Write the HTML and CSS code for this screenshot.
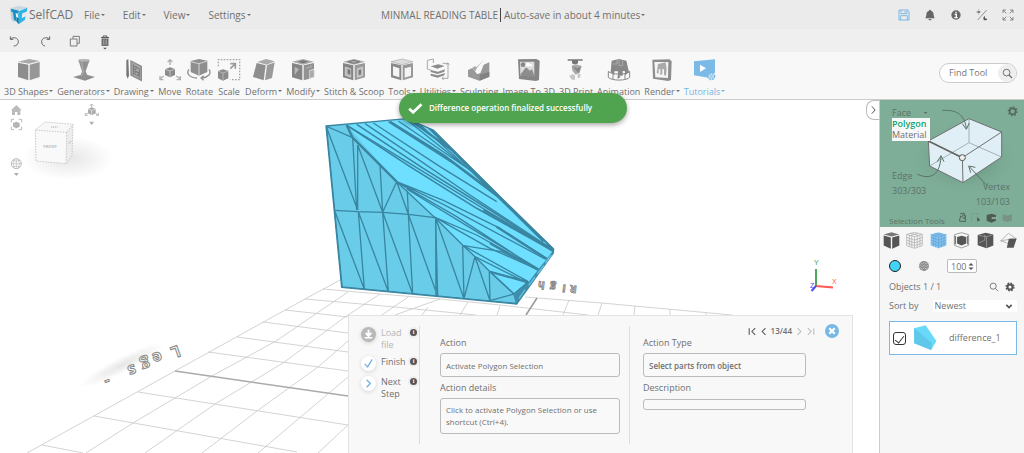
FILE: index.html
```html
<!DOCTYPE html>
<html lang="en">
<head>
<meta charset="utf-8">
<title>SelfCAD</title>
<link rel="stylesheet" href="styles.css">
</head>
<body>
<div class="app">
<header class="menubar">
  <a class="brand" href="#">
    <svg class="brand-mark" viewBox="0 0 54 60" aria-hidden="true"><path d="M0 10 26 2 54 8 26 16z" fill="#c9d8df"/><path d="M0 10 12 13 14 52 5 45z" fill="#b9ccd5"/><path d="M4 11 27 17 24 26 17 24 20 50 12 44 9 22 3 19z" fill="#168fc4"/><path d="M28 18 52 8 50 20 37 25 35 40 46 34 45 44 26 58 24 28z" fill="#2bb4ea"/><path d="M20 50 26 58 26 40 19 36z" fill="#0b76a8"/></svg>
    <span>SelfCAD</span>
  </a>
  <nav class="menus">
    <button class="menu caret">File</button>
    <button class="menu caret">Edit</button>
    <button class="menu caret">View</button>
    <button class="menu caret">Settings</button>
  </nav>
  <div class="doc">
    <span class="doc-name">MINMAL READING TABLE</span>
    <button class="menu caret autosave">Auto-save in about 4 minutes</button>
  </div>
  <div class="status">
    <button class="icon-btn" aria-label="Save"><svg viewBox="0 0 36 36"><path d="M3 3h26l4 4v26H3zM9 3v11h18V3M8 33V20h20v13M21 6v5" fill="none" stroke="#7db9e3" stroke-width="3"/></svg></button>
    <button class="icon-btn" aria-label="Notifications"><svg viewBox="0 0 36 36"><path d="M18 2c2 0 3 1 3 3 6 2 8 6 8 12 0 6 2 8 4 11H3c2-3 4-5 4-11 0-6 2-10 8-12 0-2 1-3 3-3zM13 30h10c-1 5-9 5-10 0z" fill="#666"/></svg></button>
    <button class="icon-btn" aria-label="Information"><svg viewBox="0 0 36 36"><circle cx="18" cy="18" r="14" fill="#666"/><path d="M18 8v5M14 16h5v10M13 26h10" stroke="#fff" stroke-width="4" fill="none"/></svg></button>
    <button class="icon-btn" aria-label="Light or dark theme"><svg viewBox="0 0 36 36"><path d="M32 3 5 33" stroke="#666" stroke-width="2"/><circle cx="8" cy="9" r="4" fill="#777"/><path d="M8 1v3M8 14v3M0 9h3M13 9h3" stroke="#888" stroke-width="2"/><path d="M27 21c-2 6 1 9 7 8-2 6-11 6-12 0 0-4 2-7 5-8z" fill="#555"/></svg></button>
    <button class="icon-btn" aria-label="Full screen"><svg viewBox="0 0 36 36"><path d="M3 12V3h9M3 3l10 10M24 3h9v9M33 3 23 13M3 24v9h9M3 33l10-10M33 24v9h-9M33 33 23 23" fill="none" stroke="#777" stroke-width="2.5"/></svg></button>
  </div>
</header>

<div class="quickbar">
  <button class="icon-btn" aria-label="Undo"><svg viewBox="0 0 36 36"><path d="M4 4v9h9M5 12c8-7 23-4 23 8 0 8-6 13-14 13" fill="none" stroke="#666" stroke-width="3"/></svg></button>
  <button class="icon-btn" aria-label="Redo"><svg viewBox="0 0 36 36"><path d="M32 4v9h-9M31 12C23 5 8 8 8 20c0 8 4 12 10 13" fill="none" stroke="#666" stroke-width="3"/></svg></button>
  <button class="icon-btn" aria-label="Copy"><svg viewBox="0 0 36 36"><path d="M12 11V4h19v21h-6M4 12h20v21H4z" fill="none" stroke="#666" stroke-width="2.5"/></svg></button>
  <button class="icon-btn" aria-label="Delete"><svg viewBox="0 0 36 48"><path d="M5 8h26M12 7V3h12v4" stroke="#555" stroke-width="3" fill="none"/><path d="M7 11h22v24H7z" fill="#666"/><path d="M13 14v18M18 14v18M23 14v18" stroke="#bbb" stroke-width="2"/><path d="m12 41h12l-6 5z" fill="#555"/></svg></button>
</div>

<div class="toolbar">
  <nav class="tools">
    <button class="tool"><svg viewBox="0 0 72 72"><path d="M3 11 36 3 68 9 36 17z" fill="#aaa"/><path d="M3 14 34 20v47L3 57z" fill="#8d8d8d"/><path d="M38 20 68 12v45L38 67z" fill="#979797"/></svg><span class="caret">3D Shapes</span></button>
    <button class="tool"><svg viewBox="0 0 72 72"><path d="M3 57 36 48l33 9-30 11z" fill="#8e8e8e"/><path d="M19 6h34L41 40l7 16-12 5-12-5 6-16z" fill="#919191"/><ellipse cx="36" cy="7" rx="17" ry="4" fill="#b5b5b5"/><path d="M28 10 34 40l-6 14" stroke="#aaa" stroke-width="4" fill="none"/></svg><span class="caret">Generators</span></button>
    <button class="tool"><svg viewBox="0 0 72 72"><path d="M13 7 19 3l2 50-4 9-4-10z" fill="#777"/><path d="M27 9 58 25v42L27 51z" fill="#aaa" stroke="#8a8a8a" stroke-width="4"/><path d="M34 19v31M34 23l18 9v27M34 37l18 9M42 26v9l-8-3M36 47l13 7V44l-6-3z" fill="none" stroke="#777" stroke-width="3"/></svg><span class="caret">Drawing</span></button>
    <button class="tool"><svg viewBox="0 0 72 72"><path d="M21 34 36 28l15 5v18l-15 7-15-7z" fill="#8b8b8b"/><path d="m21 34 15 5 15-6M36 39v19" stroke="#ddd" stroke-width="2" fill="none"/><path d="M36 21V6M29 12l7-7 7 7M17 54 6 63M6 54v11h10M55 54l12 9M67 54v11H56" stroke="#b0b0b0" stroke-width="4" fill="none"/></svg><span>Move</span></button>
    <button class="tool"><svg viewBox="0 0 72 72"><path d="M11 9 36 3l25 5v34L36 53 11 42z" fill="#8f8f8f"/><path d="m11 11 25 6 25-8M36 17v36" stroke="#d5d5d5" stroke-width="3" fill="none"/><path d="M6 34C-4 46 8 60 30 60M66 34c9 13-3 24-20 26M50 53l-8 7 8 7" stroke="#929292" stroke-width="4" fill="none"/></svg><span>Rotate</span></button>
    <button class="tool"><svg viewBox="0 0 72 72"><path d="M4 25V5h64v60H40" fill="none" stroke="#a5a5a5" stroke-width="4" stroke-dasharray="5 4"/><path d="m3 39 15-5 16 5v22l-16 7-15-7z" fill="#8b8b8b"/><path d="m3 39 15 6 16-6M18 45v23" stroke="#ccc" stroke-width="2" fill="none"/><path d="M40 32 54 18M40 17h15v15" stroke="#999" stroke-width="5" fill="none"/></svg><span>Scale</span></button>
    <button class="tool"><svg viewBox="0 0 72 72"><path d="M16 12 42 3l26 7-24 10z" fill="#aaa"/><path d="M14 15 41 22 35 67 3 57z" fill="#8e8e8e"/><path d="M45 22 68 13 60 60 39 67z" fill="#9a9a9a"/></svg><span class="caret">Deform</span></button>
    <button class="tool"><svg viewBox="0 0 72 72"><path d="M3 11 36 3l33 8-33 9z" fill="#aaa"/><path d="m20 11 16-4 17 4-17 5z" fill="#777"/><path d="M3 15 34 22v45L3 58z" fill="#858585"/><path d="M11 27 24 33 11 51z" fill="#b8b8b8"/><path d="m38 22 31-7v18l-14 4v25l-17 5z" fill="#929292"/><path d="m46 31 17-6M56 38v23l13-4V35z" stroke="#c8c8c8" stroke-width="2" fill="#aaa"/></svg><span class="caret">Modify</span></button>
    <button class="tool"><svg viewBox="0 0 72 72"><path d="M3 11 36 3l33 8-33 9z" fill="#aaa"/><path d="m18 11 18-4 17 4-17 5z" fill="none" stroke="#777" stroke-width="3"/><path d="M3 15 34 22v45L3 58z" fill="#858585"/><path d="M38 22 69 15v43l-31 9z" fill="#999"/><path d="m10 27 16 6v25l-16-6zM46 32l16-5v26l-16 5z" fill="#bbb" stroke="#ddd" stroke-width="2"/><path d="m17 33 8 3v14l-8-3zM50 37l7-2v14l-7 2z" fill="#777"/></svg><span>Stitch &amp; Scoop</span></button>
    <button class="tool"><svg viewBox="0 0 72 72"><path d="M3 11 36 3l33 8-33 9z" fill="#ddd" stroke="#aaa" stroke-width="2"/><path d="M3 15 34 22v45L3 58z" fill="#8a8a8a"/><path d="M38 22 69 15v43l-31 9z" fill="#999"/><path d="m9 25 19 6v27L9 52zM44 31l19-5v27l-19 6z" fill="#f4f4f4"/></svg><span class="caret">Tools</span></button>
    <button class="tool"><svg viewBox="0 0 72 72"><path d="M4 7 22 3v12M4 7v26l12 4M50 16h16v45H48M61 20l5-5 4 5M53 57l-5 4 5 5" fill="none" stroke="#999" stroke-width="2.5"/><path d="m14 25 23-6 19 5-22 8zM14 36l22 5 21-7-2 7-20 7-21-6zM14 47l22 5 21-7-2 7-20 7-21-6z" fill="#8d8d8d"/></svg><span class="caret">Utilities</span></button>
    <button class="tool"><svg viewBox="0 0 72 72"><path d="M3 36 16 30 30 48 40 46 50 20 67 13v43L37 68 3 56z" fill="#999"/><path d="m38 50 29-9v15L38 68z" fill="#828282"/><path d="M53 3 31 28l-7 13-8-12c5-4 8-4 13-2z" fill="#aaa"/></svg><span>Sculpting</span></button>
    <button class="tool"><svg viewBox="0 0 72 72"><path d="M3 4 58 3l10 5-2 58-9 3L6 63z" fill="#858585"/><path d="M9 11h43v43L10 53z" fill="#ddd"/><path d="m10 50 17-22 12 10 6-5 7 20v4l-42-4z" fill="#8d8d8d"/><circle cx="18" cy="20" r="7" fill="#888"/><path d="M26 20q4-9 12-3l8 3v5H26z" fill="#fff"/></svg><span>Image To 3D</span></button>
    <button class="tool"><svg viewBox="0 0 72 72"><path d="M11 4h45v4H11zM24 8h18v8l-5 3h-8l-5-3z" fill="#777"/><path d="m23 23 12-4 18 5-6 20-12 6-10-12z" fill="#aaa"/><path d="m25 25 15 6 11-6-7 20-10-10z" fill="#888"/><path d="m15 54 13-6 5 5v12h-9zM41 45l8 3v10l-8 3z" fill="#c6c6c6"/></svg><span>3D Print</span></button>
    <button class="tool"><svg viewBox="0 0 72 72"><path d="M14 8 36 3l22 5 8 35-12 9V40l-7-1v14H33V40H22v12L11 42z" fill="#888"/><path d="M36 5v18h11V7M18 18h12V6" fill="none" stroke="#aaa" stroke-width="3"/><path d="M4 40v18c9 11 56 11 64 0V40c-9 11-55 11-64 0zM18 48v16M54 48v16" fill="none" stroke="#888" stroke-width="3"/><path d="m32 52 9 5-9 5z" fill="#777"/></svg><span>Animation</span></button>
    <button class="tool"><svg viewBox="0 0 72 72"><path d="M7 5 58 4l7 6-2 56-8 3L9 62z" fill="#8d8d8d"/><path d="M13 12 55 12 54 60 16 58z" fill="#f5f5f5"/><path d="m24 18 23-5 3 20-2 20-6-2V33l-5 1v15l-6 2V33l-5 1v13l-6-2z" fill="#aaa"/></svg><span class="caret">Render</span></button>
    <button class="tool active"><svg viewBox="0 0 72 72"><path d="M3 10 66 4v41c-14 0-17 10-15 15L3 52z" fill="#7bb9e6"/><path d="m21 20 18 11-18 11z" fill="#fff"/><circle cx="55" cy="55" r="10" fill="#c3def2" stroke="#7bb9e6" stroke-width="4" stroke-dasharray="5 3"/><path d="m49 48 12 14M61 49 49 61" stroke="#7bb9e6" stroke-width="2"/></svg><span class="caret">Tutorials</span></button>
  </nav>
  <form class="find">
    <input type="text" aria-label="Find Tool" placeholder="Find Tool">
    <button type="button" aria-label="Search"><svg viewBox="0 0 36 36"><circle cx="15" cy="15" r="11" fill="none" stroke="#666" stroke-width="3"/><path d="m23 23 10 10" stroke="#666" stroke-width="4"/></svg></button>
  </form>
</div>

<div class="toast" role="status"><svg viewBox="0 0 44 33" aria-hidden="true"><path d="M3 17 15 28 40 4" fill="none" stroke="#fff" stroke-width="8"/></svg><span>Difference operation finalized successfully</span></div>

<main class="workspace">
<section class="stage">
  <svg class="scene" viewBox="0 0 880 353" preserveAspectRatio="xMinYMin slice" aria-label="3D scene">
    <defs>
      <radialGradient id="soft"><stop offset="0" stop-color="#000" stop-opacity=".1"/><stop offset="1" stop-color="#000" stop-opacity="0"/></radialGradient>
      <clipPath id="body"><path d="M48 93 290 71 370 105 600 334 731 462 730 474 620 627 95 577z"/></clipPath>
    </defs>
    <g transform="translate(0 -100)" fill="none" stroke="#c8c8c8" stroke-width=".8">
      <path d="M27 453 305 299 342 279M86 453 133 423 212 376 276 341 348 292M145 453 215 404 283 363 345 317 380 294M202 453 257 411 318 367 363 328 408 297M258 453 348 377M318 453 348 425M395 315 440 299M428 307 422 315M468 302 460 315M500 306 497 315"/>
      <path d="M42 445 83 453M94 416 297 452M138 392 348 425M208 352 348 371M237 337 348 352M263 322 348 333M285 310 348 317M305 299 395 307 476 315M323 289 380 294 440 299 500 305 588 315M525 297 602 303 732 315"/>
      <path d="M569 300 563 315M602 303 598 315M635 306 634 315M670 309V315M706 313V315"/>
      <path d="M175 371 348 396" stroke="#aaa" stroke-width="1.5"/><path d="M537 298 526 315" stroke="#999" stroke-width="1.5"/>
    </g>
    <ellipse cx="122" cy="265" rx="48" ry="8" fill="url(#soft)" transform="rotate(-27 122 265)"/>
    <text class="floor-label" x="178 160 148 134 108" y="245 251 258 264 276" rotate="160">Legs-</text>
    <text class="floor-label far" x="577 566 556 545" y="186 185 184 182" rotate="187">Righ</text>

    <g transform="translate(310 -5) scale(.33333)" stroke-linejoin="round">
      <path d="M48 93 290 71 370 105 600 334 731 462 730 474 620 627 95 577z" fill="#6fdfff"/>
      <path d="M48 93 110 90 260 260 375 368 460 452 540 530 612 597 620 627 95 577z" fill="#69cde9"/>
      <g clip-path="url(#body)" fill="none" stroke="#3a86a2" stroke-width="4">
        <path d="M48 93 143 345M48 93 128 128 140 345M110 90 125 125 210 210 260 260 375 368 460 452 495 485 540 530 612 597M143 150V345M143 150 218 352M210 210 218 352M260 260 218 352M260 260 295 358M292 290 295 358M292 290 375 368"/>
        <path d="M73 346 145 350 218 352 295 358 375 368M75 350 163 583 145 350 235 590 218 352 308 597 295 358 383 604 377 370 462 611 458 452M377 370 378 604M495 485 462 611M495 485 540 617 538 530M540 617 612 597 620 627M612 597 655 560"/>
        <path d="M95 577 620 627M48 93 95 577M110 90 128 128 260 260" stroke-width="7"/>
        <path d="M112 92 310 212 730 470M165 86 320 190 480 300 726 462M190 84 390 215 560 320M235 80 430 205 600 334M265 78 480 225 700 440M290 74 510 250 700 436M320 80 590 325M345 88 560 295"/>
        <path d="M140 88 340 220 540 345 722 462M112 92 300 215 500 340 730 468" stroke-width="5"/>
        <path d="M300 75 460 190 600 334M240 80 400 180 520 270 610 338M350 92 600 335" stroke-width="7"/>
        <path d="M520 345 730 464M600 335 731 463" stroke-width="7"/>
        <path d="M260 260 400 316 560 395 710 490M260 260 400 328 705 492M262 262 440 365 684 524M290 282 470 392 686 522M370 365 500 420 684 524M380 370 540 460 684 524"/>
        <path d="M560 395 710 492M540 445 684 524" stroke-width="7"/>
        <path d="M460 452 575 470 684 524M460 452 655 560M495 485 655 565M540 530 655 560M540 530 612 597M612 597 655 562"/>
        <path d="M540 530 652 562" stroke-width="6"/>
      </g>
      <path d="M48 93 290 71 370 105 600 334 731 462 730 474 620 627 95 577z" fill="none" stroke="#3a86a2" stroke-width="4"/>
      <path d="M730 466 710 492 684 524 656 561 612 600 620 627 730 474z" fill="#3f8ead"/>
      <path d="m724 480-18 24M702 511l-20 26M675 546l-19 25M645 584l-18 26" stroke="#5fc4e2" stroke-width="4"/>
    </g>

    <ellipse cx="68" cy="58" rx="46" ry="22" fill="url(#soft)"/>
    <g transform="translate(0 -5) scale(.33333)">
      <path d="M106 105 135 81 219 88 200 112z" fill="#f8f8f8"/><path d="M106 105 200 112 198 206 108 198z" fill="#f9f9f9"/><path d="M200 112 219 88 216 182 198 206z" fill="#ececec"/>
      <path d="M106 105 135 81 219 88 200 112zM106 105 108 198 198 206 216 182 219 88M200 112 198 206" fill="none" stroke="#ccc" stroke-width="3" stroke-dasharray="5 3"/>
      <path d="M153 96h20M207 145l6-7" stroke="#c8c8c8" stroke-width="5" stroke-dasharray="4 2"/>
    </g>
    <text class="cube-label" x="50" y="48">FRONT</text>

    <g transform="translate(0 -5) scale(.33333)">
      <path d="m33 46 16-16 16 16h-4v14h-9v-9h-7v9h-9V46z" fill="#bbb"/>
      <path d="M34 82v-9h8M56 73h9v9M34 95v9h8M56 104h9v-9" fill="none" stroke="#bbb" stroke-width="3"/><path d="m39 84 10-4 10 4v11l-10 5-10-5z" fill="#b5b5b5"/>
      <circle cx="49" cy="206" r="15" fill="none" stroke="#bbb" stroke-width="3"/><path d="M34 206h31M49 191v31M38 196q11 6 22 0M38 216q11-6 22 0M43 193q-7 13 0 26M55 193q7 13 0 26" fill="none" stroke="#bbb" stroke-width="2"/>
      <path d="M42 234h14l-7 9zM268 80h14l-7 10z" fill="#aaa"/>
      <path d="m264 42 11-5 12 5v13l-12 6-11-6z" fill="#aaa"/><path d="m264 42 11 5 12-5M275 47v14" stroke="#eee" stroke-width="2" fill="none"/><path d="M275 38V27M270 32l5-5 5 5M264 54l-8 6M286 54l8 6M256 54v7h7M295 54v7h-7" stroke="#b5b5b5" stroke-width="3" fill="none"/>
    </g>
    <path d="M816 186V169" stroke="#4da95a" stroke-width="2"/><path d="m816 186 17 1.500" stroke="#ff5a50" stroke-width="2"/><path d="m816 186-4.500 5" stroke="#4b4bf5" stroke-width="2"/>
    <text class="axis axis-y" x="814" y="165">Y</text><text class="axis axis-x" x="832" y="184">X</text><text class="axis axis-z" x="810" y="188">Z</text>
  </svg>
  <button class="collapse" aria-label="Collapse panel"><svg viewBox="0 0 20 30"><path d="m5 4 10 11L5 26" fill="none" stroke="#555" stroke-width="3"/></svg></button>

  <section class="guide" aria-label="Tutorial">
    <div class="steps">
      <div class="step off"><button class="round" aria-label="Load file"><svg viewBox="0 0 48 48"><path d="M24 9v16M15 19l9 10 9-10" fill="none" stroke="#fff" stroke-width="6"/><path d="M12 32h24v5H12z" fill="#fff"/></svg></button><span class="step-name">Load file</span><button class="info" aria-label="About load file">i</button></div>
      <div class="step"><button class="round" aria-label="Finish"><svg viewBox="0 0 48 48"><path d="m12 25 9 10 15-24" fill="none" stroke="#6fb3e4" stroke-width="4"/></svg></button><span class="step-name">Finish</span><button class="info" aria-label="About finish">i</button></div>
      <div class="step"><button class="round" aria-label="Next step"><svg viewBox="0 0 48 48"><path d="m18 12 12 12-12 12" fill="none" stroke="#6fb3e4" stroke-width="4"/></svg></button><span class="step-name">Next Step</span><button class="info" aria-label="About next step">i</button></div>
    </div>
    <div class="fields action">
      <label for="action">Action</label>
      <input id="action" type="text" value="Activate Polygon Selection" readonly>
      <label for="details">Action details</label>
      <textarea id="details" readonly>Click to activate Polygon Selection or use shortcut (Ctrl+4).</textarea>
    </div>
    <div class="fields kind">
      <label for="kind">Action Type</label>
      <input id="kind" class="strong" type="text" value="Select parts from object" readonly>
      <label for="desc">Description</label>
      <input id="desc" class="empty" type="text" readonly>
    </div>
    <div class="pager">
      <button aria-label="First"><svg viewBox="0 0 30 30"><path d="M4 4v22M24 4 13 15l11 11" fill="none" stroke="#555" stroke-width="3.500"/></svg></button>
      <button aria-label="Previous"><svg viewBox="0 0 20 30"><path d="M15 4 4 15l11 11" fill="none" stroke="#555" stroke-width="3.500"/></svg></button>
      <span>13/44</span>
      <button aria-label="Next"><svg viewBox="0 0 20 30"><path d="m5 4 11 11L5 26" fill="none" stroke="#bbb" stroke-width="3.500"/></svg></button>
      <button aria-label="Last"><svg viewBox="0 0 30 30"><path d="m6 4 11 11L6 26M26 4v22" fill="none" stroke="#bbb" stroke-width="3.500"/></svg></button>
      <button class="close" aria-label="Close"><svg viewBox="0 0 36 36"><path d="m11 11 14 14M25 11 11 25" stroke="#fff" stroke-width="6"/></svg></button>
    </div>
  </section>
</section>

<aside class="side">
  <section class="select-box" aria-label="Selection Tools">
    <svg class="diagram" viewBox="18 12 432 381" aria-hidden="true">
      <defs><radialGradient id="glow"><stop offset="0" stop-color="#34584a" stop-opacity=".6"/><stop offset="1" stop-color="#7fae98" stop-opacity="0"/></radialGradient></defs>
      <ellipse cx="270" cy="185" rx="165" ry="115" fill="url(#glow)"/>
      <path d="M163 135 285 68 383 108 383 183 267 260 167 210z" fill="#e0eef5"/>
      <path d="M285 68v72L167 210M285 140l98 43" fill="none" stroke="#a3b2b8" stroke-width="3"/>
      <path d="M163 135 285 68 383 108 265 185zM163 135 167 210 267 260 383 183V108M265 185l2 75" fill="none" stroke="#717171" stroke-width="3"/>
      <path d="m163 135 102 50" stroke="#666" stroke-width="5"/>
      <circle cx="265" cy="185" r="9" fill="#eee" stroke="#555" stroke-width="3"/>
      <path d="M205 43c35-1 65 5 72 54M265 83l12 17 9-19M130 235c30 13 67 13 71-53M190 197l11-18 9 18M340 270 287 213M304 214l-20-4 6 20" fill="none" stroke="#5c7168" stroke-width="3"/>
      <path d="M149 48h11l-5 6z" fill="#5c6d65"/>
      <circle cx="416" cy="46" r="9" fill="none" stroke="#57695f" stroke-width="5"/><circle cx="416" cy="46" r="13" fill="none" stroke="#57695f" stroke-width="4" stroke-dasharray="5 5"/>
      <path d="m258 354 12-3 5 18 M256 375l4-15 14 9v8zM264 359q12-8 10 6" fill="none" stroke="#53675d" stroke-width="3"/>
      <path d="M293 375v-22h20v8" fill="none" stroke="#668576" stroke-width="2" stroke-dasharray="3 4"/><path d="m309 363 10 9-9 5z" fill="#4d5d56"/>
      <path d="m338 357 14-4 14 4v17l-14 6-14-6z" fill="#4d5b55"/><path d="M353 366h14" stroke="#b1c5bb" stroke-width="4"/><path d="m386 355 14 4 14-4v19l-14 4-14-4z" fill="#789285"/>
    </svg>
    <span class="tag face">Face</span>
    <div class="options"><button class="chosen">Polygon</button><button>Material</button></div>
    <span class="tag edge">Edge<br>303/303</span>
    <span class="tag vertex">Vertex<br>103/103</span>
    <span class="tag caption">Selection Tools</span>
  </section>
  <div class="views">
    <button aria-label="Solid"><svg viewBox="0 0 50 50"><path d="m2 7 23-6 23 6-23 6z" fill="#777"/><path d="m2 10 21 6v33L2 40zM27 16l21-6v30l-21 9z" fill="#555"/></svg></button>
    <button aria-label="Wireframe"><svg viewBox="0 0 50 50"><path d="m2 7 23-6 23 6v33l-23 8-23-8zM2 7l23 7 23-7M25 14v34M10 9v33M17 11v34M33 11v34M41 9v33M2 16l23 8 23-8M2 24l23 8 23-8M2 32l23 8 23-8M13 4l23 6M36 4 13 10" fill="none" stroke="#aaa" stroke-width="2"/></svg></button>
    <button aria-label="Solid and wireframe"><svg viewBox="0 0 50 50"><path d="m2 7 23-6 23 6v33l-23 8-23-8z" fill="#8bc3ec"/><path d="m2 7 23 7 23-7M25 14v34M10 9v33M17 11v34M33 11v34M41 9v33M2 16l23 8 23-8M2 24l23 8 23-8M2 32l23 8 23-8M13 4l23 6M36 4 13 10" fill="none" stroke="#5ba5db" stroke-width="2"/></svg></button>
    <button aria-label="X-ray"><svg viewBox="0 0 50 50"><path d="m4 8 21-6 21 6v31l-21 8-21-8z" fill="none" stroke="#777" stroke-width="2"/><path d="m12 15 13-4 14 4v19l-14 6-13-6z" fill="#555"/><path d="M7 12v24M43 12v24" stroke="#777" stroke-width="4"/></svg></button>
    <button aria-label="Section"><svg viewBox="0 0 50 50"><path d="m2 9 23-7 23 5v33l-20 8-26-9z" fill="#555"/><path d="M28 14v32M5 10l23 4 18-6M6 32l17-8V8" fill="none" stroke="#aaa" stroke-width="2"/></svg></button>
    <button aria-label="Flat"><svg viewBox="0 0 50 50"><path d="M2 26 25 4l23 16M2 26l21 7M2 26l36-6" fill="none" stroke="#999" stroke-width="2"/><path d="M26 20 49 19 40 46 20 46z" fill="#555"/></svg></button>
  </div>
  <div class="material">
    <button class="swatch" aria-label="Color"></button>
    <button class="texture" aria-label="Texture"><svg viewBox="0 0 36 36"><circle cx="18" cy="18" r="15" fill="#888"/><path d="m1 12 6-5 6 5 6-5 6 5 6-5 4 4M1 20l6-5 6 5 6-5 6 5 6-5 4 4M1 28l6-5 6 5 6-5 6 5 6-5" fill="none" stroke="#ddd" stroke-width="2"/></svg></button>
    <span class="amount"><input type="text" value="100" aria-label="Opacity"><svg viewBox="0 0 18 28" aria-hidden="true"><path d="m1 11 8-8 8 8zM1 17h16l-8 8z" fill="#555"/></svg></span>
  </div>
  <div class="objects"><span>Objects 1 / 1</span>
    <button aria-label="Search objects"><svg viewBox="0 0 36 36"><circle cx="15" cy="15" r="11" fill="none" stroke="#666" stroke-width="3"/><path d="m23 23 10 10" stroke="#666" stroke-width="3"/></svg></button>
    <button aria-label="Object settings"><svg viewBox="0 0 36 36"><circle cx="18" cy="18" r="9" fill="none" stroke="#555" stroke-width="7"/><circle cx="18" cy="18" r="14" fill="none" stroke="#555" stroke-width="5" stroke-dasharray="6 5"/></svg></button>
  </div>
  <div class="sort"><label for="sort">Sort by</label>
    <span class="pick"><select id="sort"><option>Newest</option></select><svg viewBox="0 0 24 20" aria-hidden="true"><path d="m4 5 8 8 8-8" fill="none" stroke="#555" stroke-width="5"/></svg></span>
  </div>
  <label class="object"><input type="checkbox" checked>
    <svg viewBox="0 0 72 80" aria-hidden="true"><path d="M2 10 38 1 71 49 55 77 3 56z" fill="#69d9fa"/><path d="M3 10 57 55 55 77 3 56z" fill="#5fc7e9"/></svg>
    <span>difference_1</span></label>
</aside>
</main>
</div>
</body>
</html>
```
FILE: styles.css
```css
* { box-sizing: border-box; }
body { margin: 0; font: 10px/12px "Open Sans", "Noto Sans", sans-serif; color: #707070; }
button, input, textarea, select { font: inherit; color: inherit; margin: 0; }
button { border: 0; padding: 0; background: none; cursor: pointer; }
svg { display: block; }
a { color: inherit; text-decoration: none; }
.app { position: relative; display: flex; flex-direction: column; height: 100vh; overflow: hidden; }

.caret::after { content: ""; display: inline-block; margin-left: 1px; vertical-align: 3px; border: 2px solid transparent; border-top-color: currentColor; border-bottom: 0; }

.menubar { display: grid; grid-template-columns: 84px 297px 1fr auto; align-items: center; height: 29px; flex: none; background: #ebebeb; padding-right: 10px; }
.brand { display: flex; align-items: center; gap: 1px; padding-left: 10px; font-size: 12px; }
.brand-mark { width: 18px; height: 20px; flex: none; }
.menus { display: flex; gap: 18px; }
.doc { display: flex; align-items: center; }
.autosave { border-left: 1px solid #444; margin-left: 2px; padding-left: 3px; line-height: 14px; white-space: nowrap; }
.doc-name { white-space: nowrap; }
.status { display: flex; gap: 14px; }
.icon-btn svg { width: 12px; height: 12px; }

.quickbar { display: flex; align-items: flex-start; gap: 18px; height: 23px; padding: 6px 9px; flex: none; background: #efefef; }
.quickbar .icon-btn svg { height: 12px; }
.quickbar .icon-btn:last-child svg { height: 15px; }

.toolbar { display: flex; justify-content: space-between; height: 48px; flex: none; background: #f8f8f8; border-bottom: 1px solid #ccc; }
.tools { display: flex; gap: 4px; padding: 6px 0 0 4px; font-size: 9px; }
.tool { display: flex; flex-direction: column; align-items: center; gap: 4px; white-space: nowrap; }
.tool svg { width: 24px; height: 24px; }
.active { color: #74b6e2; }
.find { display: flex; align-items: center; width: 78px; height: 20px; margin: 11px 7px 0 0; border: 1px solid #ccc; border-radius: 10px; background: #fff; overflow: hidden; font-size: 9px; }
.find input { flex: 1; min-width: 0; border: 0; padding: 0 0 0 9px; background: none; outline: 0; }
.find input::placeholder { color: #777; opacity: 1; }
.find button { width: 18px; height: 18px; border-radius: 9px; background: #eee; display: grid; place-items: center; }
.find button svg { width: 11px; height: 11px; }

.toast { position: absolute; z-index: 5; left: 399px; top: 93px; width: 228px; height: 30px; display: flex; align-items: center; gap: 6px; padding-left: 9px; border-radius: 15px; background: #50a44f; color: #fff; font-weight: 600; font-size: 8px; white-space: nowrap; box-shadow: 0 2px 5px rgba(0, 0, 0, .35); }
.toast svg { width: 15px; height: 11px; flex: none; }

.workspace { flex: 1; min-height: 0; display: flex; }
.stage { position: relative; flex: 1; min-width: 0; overflow: hidden; background: #fff; }
.scene { position: absolute; inset: 0; width: 100%; height: 100%; }
.floor-label { font: bold 16px "Open Sans", sans-serif; fill: #fff; stroke: #888; stroke-width: 1px; }
.floor-label.far { font-size: 10px; }
.cube-label { font: bold 4px "Open Sans", sans-serif; fill: #bbb; text-anchor: middle; }
.axis { font: 7px "Liberation Sans", sans-serif; }
.axis-y { fill: #3fa14a; }
.axis-x { fill: #ff5a50; }
.axis-z { fill: #4b4bf5; }
.collapse { position: absolute; right: 0; top: 0; width: 13px; height: 20px; display: grid; place-items: center; background: #fff; border: 1px solid #bbb; border-right: 0; border-radius: 8px 0 0 8px; }
.collapse svg { width: 7px; height: 10px; }

.guide { position: absolute; left: 348px; right: 26px; bottom: 0; height: 138px; display: grid; grid-template-columns: 71px 210px 1fr; padding: 10px 0; background: #f8f8f8; border: 1px solid #e3e3e3; border-bottom: 0; }
.steps { display: flex; flex-direction: column; gap: 5px; padding-left: 12px; border-right: 1px solid #ddd; font-size: 9px; height: 118px; }
.step { display: grid; grid-template-columns: 15px 24px 8px; gap: 5px; align-items: start; }
.step:nth-child(1) { padding-top: 1px; }
.step:nth-child(2) { height: 15px; }
.step-name { line-height: 12px; }
.off .step-name { color: #b5b5b5; }
.round { width: 15px; height: 15px; border-radius: 8px; background: #fff; box-shadow: 0 1px 4px rgba(0, 0, 0, .15); }
.off .round { background: #b9b9b9; }
.info { width: 7px; height: 7px; margin-top: 2px; border-radius: 4px; background: #555; color: #fff; font: bold 6px/7px "Liberation Serif", serif; box-shadow: 0 0 0 2px #eee; }
.fields { display: flex; flex-direction: column; font-size: 9px; }
.action { padding: 11px 9px 0 20px; border-right: 1px solid #ddd; }
.kind { padding: 11px 46px 0 13px; }
.fields label { line-height: 12px; }
.fields input, .fields textarea { display: block; width: 100%; height: 24px; margin: 4px 0 5px; padding: 0 5px; border: 1px solid #bbb; border-radius: 3px; background: #f9f9f9; outline: 0; font-size: 8px; }
.fields textarea { height: 36px; padding-top: 5px; line-height: 12px; resize: none; overflow: hidden; }
.fields .strong { font-weight: 600; }
.fields .empty { height: 11px; margin-top: 5px; }
.pager { position: absolute; right: 13px; top: 8px; display: flex; align-items: center; gap: 4px; font-weight: 600; font-size: 8px; }
.pager svg { height: 9px; }
.pager .close { width: 14px; height: 14px; margin-left: 6px; border-radius: 7px; background: #77b8e5; }
.pager .close svg { width: 14px; height: 14px; }

.side { width: 145px; flex: none; border-left: 1px solid #ccc; background: #f6f6f6; font-size: 9px; }
.select-box { position: relative; height: 127px; background: #7fae98; }
.diagram { width: 100%; height: 100%; }
.tag { position: absolute; color: #5d7067; line-height: 15px; white-space: nowrap; }
.face { left: 12px; top: 5px; }
.edge { left: 12px; top: 68px; }
.vertex { right: 14px; top: 79px; text-align: right; }
.caption { left: 9px; top: 113px; font-size: 8px; }
.options { position: absolute; left: 12px; top: 18px; width: 38px; height: 23px; display: flex; flex-direction: column; background: #f8f8f8; }
.options button { line-height: 11px; text-align: left; }
.options .chosen { color: #0ea572; font-weight: 600; }
.views { display: flex; justify-content: space-between; padding: 5px 7px 0 3px; }
.views svg { width: 17px; height: 17px; }
.material { display: flex; align-items: center; padding: 10px 0 0 9px; }
.swatch { width: 12px; height: 12px; border: 1px solid #222; border-radius: 6px; background: #42d4f8; }
.texture { margin: 0 17px; }
.texture svg { width: 12px; height: 12px; }
.amount { display: flex; align-items: center; width: 30px; height: 14px; border: 1px solid #bbb; border-radius: 2px; background: #fff; font-size: 9px; }
.amount input { width: 20px; border: 0; padding: 0 0 0 3px; background: none; outline: 0; line-height: 11px; }
.amount svg { width: 6px; height: 9px; }
.objects { display: flex; align-items: center; gap: 6px; padding: 8px 9px 0 9px; }
.objects span { flex: 1; }
.objects svg { width: 10px; height: 10px; }
.sort { display: flex; align-items: center; padding: 7px 7px 0 9px; gap: 14px; }
.pick { position: relative; flex: 1; background: #fff; }
.pick select { appearance: none; width: 100%; height: 12px; border: 0; padding: 0 2px; background: none; display: block; outline: 0; }
.pick svg { position: absolute; right: 4px; top: 3px; width: 8px; height: 7px; pointer-events: none; }
.object { display: flex; align-items: center; height: 34px; margin: 9px 7px 0 9px; padding-left: 3px; background: #fff; border: 1px solid #7bb9e6; }
.object input { appearance: none; width: 13px; height: 13px; margin: 0; border: 1px solid #333; border-radius: 3px; display: grid; place-items: center; }
.object input:checked::before { content: ""; width: 4px; height: 8px; border: solid #333; border-width: 0 1px 1px 0; transform: rotate(38deg); }
.object svg { width: 24px; height: 26px; margin: 0 12px 0 7px; }
```
